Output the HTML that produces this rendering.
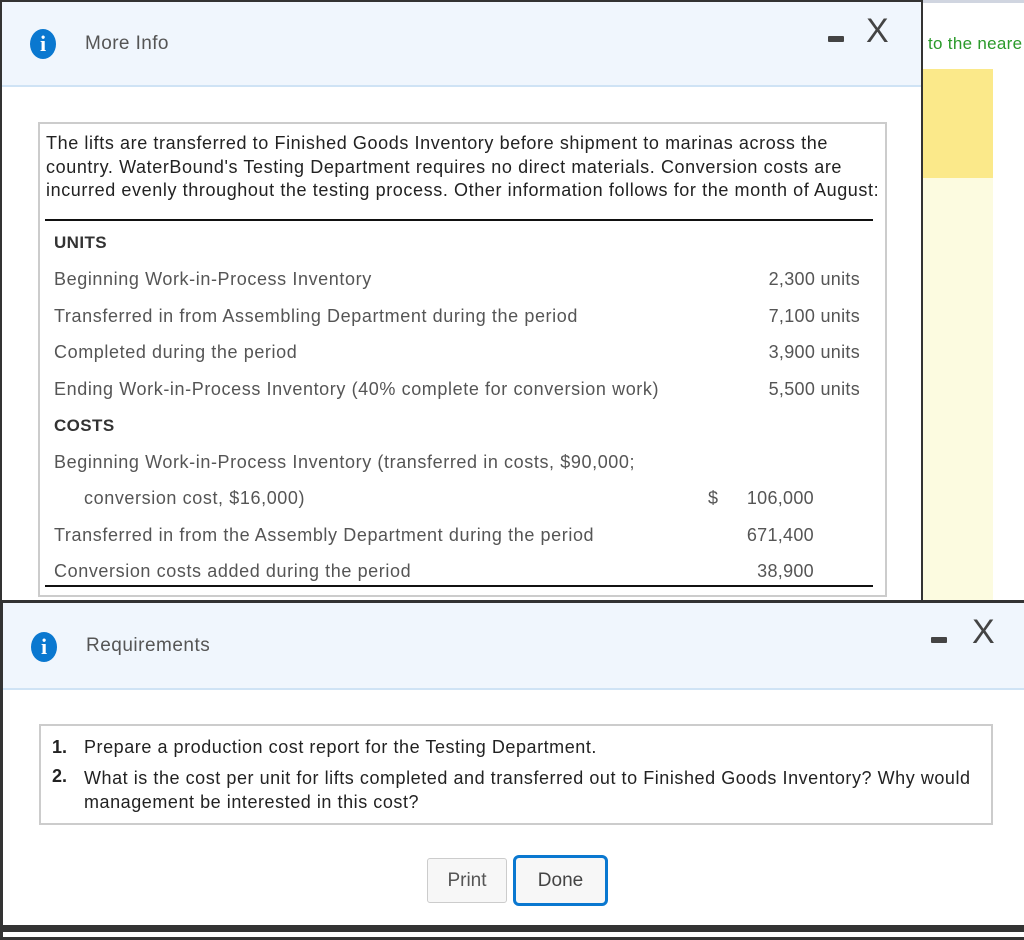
<!DOCTYPE html>
<html><head><meta charset="utf-8">
<style>
*{margin:0;padding:0;box-sizing:border-box}
body{width:1024px;height:932px;position:relative;overflow:hidden;background:#fff;font-family:"Liberation Sans",Arial,sans-serif}
.abs{position:absolute}
.icon{position:absolute;width:26px;height:30px;border-radius:50%;background:#0a78d0;color:#fff;font-family:"Liberation Serif",serif;font-weight:bold;font-size:22px;text-align:center;line-height:30px}
.ctl{position:absolute;color:#444;font-size:34px;font-weight:300}
.minb{position:absolute;width:16px;height:6px;background:#444;border-radius:1px}
.row{position:absolute;left:54px;font-size:18px;letter-spacing:0.6px;color:#555;white-space:nowrap}
.val{position:absolute;font-size:18px;letter-spacing:0.3px;color:#555;text-align:right;white-space:nowrap}
.hd{position:absolute;left:54px;font-size:17px;font-weight:bold;color:#333;letter-spacing:0.4px}
.rq{font-size:18px;color:#222;letter-spacing:0.55px}
</style></head><body>
<div class="abs" style="left:921px;top:0;width:103px;height:600px;background:#fff;border-top:3px solid #d0d5e0"></div>
<div class="abs" style="left:928px;top:34px;font-size:17px;color:#2a9a2a;letter-spacing:0.3px">to the neare</div>
<div class="abs" style="left:923px;top:69px;width:70px;height:109px;background:#fbe98a"></div>
<div class="abs" style="left:923px;top:178px;width:70px;height:422px;background:#fcfbe0"></div>

<!-- dialog 1 -->
<div class="abs" style="left:0;top:0;width:923px;height:604px;border:2px solid #333;background:#fff"></div>
<div class="abs" style="left:2px;top:2px;width:919px;height:85px;background:#f0f6fd;border-bottom:2px solid #cfe3f5"></div>
<div class="icon" style="left:30px;top:29px">i</div>
<div class="abs" style="left:85px;top:33px;font-size:19px;color:#555;letter-spacing:0.4px">More Info</div>
<div class="minb" style="left:828px;top:36px"></div>
<div class="ctl" style="left:866px;top:12px">X</div>

<div class="abs" style="left:38px;top:122px;width:849px;height:475px;border:2px solid #ccc"></div>
<div class="abs" style="left:46px;top:132px;width:840px;font-size:18px;line-height:23.5px;color:#222;letter-spacing:0.6px;white-space:nowrap">The lifts are transferred to Finished Goods Inventory before shipment to marinas across the<br>country. WaterBound's Testing Department requires no direct materials. Conversion costs are<br>incurred evenly throughout the testing process. Other information follows for the month of August:</div>
<div class="abs" style="left:45px;top:219px;width:828px;height:2px;background:#111"></div>
<div class="hd" style="top:233px">UNITS</div>
<div class="row" style="top:269px">Beginning Work-in-Process Inventory</div>
<div class="val" style="right:164px;top:269px">2,300 units</div>
<div class="row" style="top:306px">Transferred in from Assembling Department during the period</div>
<div class="val" style="right:164px;top:306px">7,100 units</div>
<div class="row" style="top:342px">Completed during the period</div>
<div class="val" style="right:164px;top:342px">3,900 units</div>
<div class="row" style="top:379px">Ending Work-in-Process Inventory (40% complete for conversion work)</div>
<div class="val" style="right:164px;top:379px">5,500 units</div>
<div class="hd" style="top:416px">COSTS</div>
<div class="row" style="top:452px">Beginning Work-in-Process Inventory (transferred in costs, $90,000;</div>
<div class="row" style="left:84px;top:488px">conversion cost, $16,000)</div>
<div class="val" style="left:708px;top:488px">$</div>
<div class="val" style="right:210px;top:488px">106,000</div>
<div class="row" style="top:525px">Transferred in from the Assembly Department during the period</div>
<div class="val" style="right:210px;top:525px">671,400</div>
<div class="row" style="top:561px">Conversion costs added during the period</div>
<div class="val" style="right:210px;top:561px">38,900</div>
<div class="abs" style="left:45px;top:585px;width:828px;height:2px;background:#111"></div>

<!-- dialog 2 -->
<div class="abs" style="left:0;top:600px;width:1030px;height:340px;border:3px solid #333;border-right:none;background:#fff"></div>
<div class="abs" style="left:3px;top:603px;width:1021px;height:87px;background:#f0f6fd;border-bottom:2px solid #cfe3f5"></div>
<div class="icon" style="left:31px;top:632px">i</div>
<div class="abs" style="left:86px;top:635px;font-size:19px;color:#555;letter-spacing:0.5px">Requirements</div>
<div class="minb" style="left:931px;top:637px"></div>
<div class="ctl" style="left:972px;top:613px">X</div>

<div class="abs" style="left:39px;top:724px;width:954px;height:101px;border:2px solid #ccc"></div>
<div class="abs" style="left:52px;top:737px;font-size:18px;color:#222;font-weight:bold">1.</div>
<div class="abs rq" style="left:84px;top:737px;white-space:nowrap">Prepare a production cost report for the Testing Department.</div>
<div class="abs" style="left:52px;top:766px;font-size:18px;color:#222;font-weight:bold">2.</div>
<div class="abs rq" style="left:84px;top:766px;line-height:24px;white-space:nowrap">What is the cost per unit for lifts completed and transferred out to Finished Goods Inventory? Why would<br>management be interested in this cost?</div>

<div class="abs" style="left:427px;top:858px;width:80px;height:45px;border:1px solid #ccc;border-radius:3px;background:#f7f7f7;font-size:19px;color:#555;text-align:center;line-height:43px">Print</div>
<div class="abs" style="left:513px;top:855px;width:95px;height:51px;border:3px solid #0a78d0;border-radius:6px;background:#f7f7f7;font-size:19px;color:#444;text-align:center;line-height:45px">Done</div>
<div class="abs" style="left:0;top:925px;width:1024px;height:7px;background:#333"></div>
</body></html>
